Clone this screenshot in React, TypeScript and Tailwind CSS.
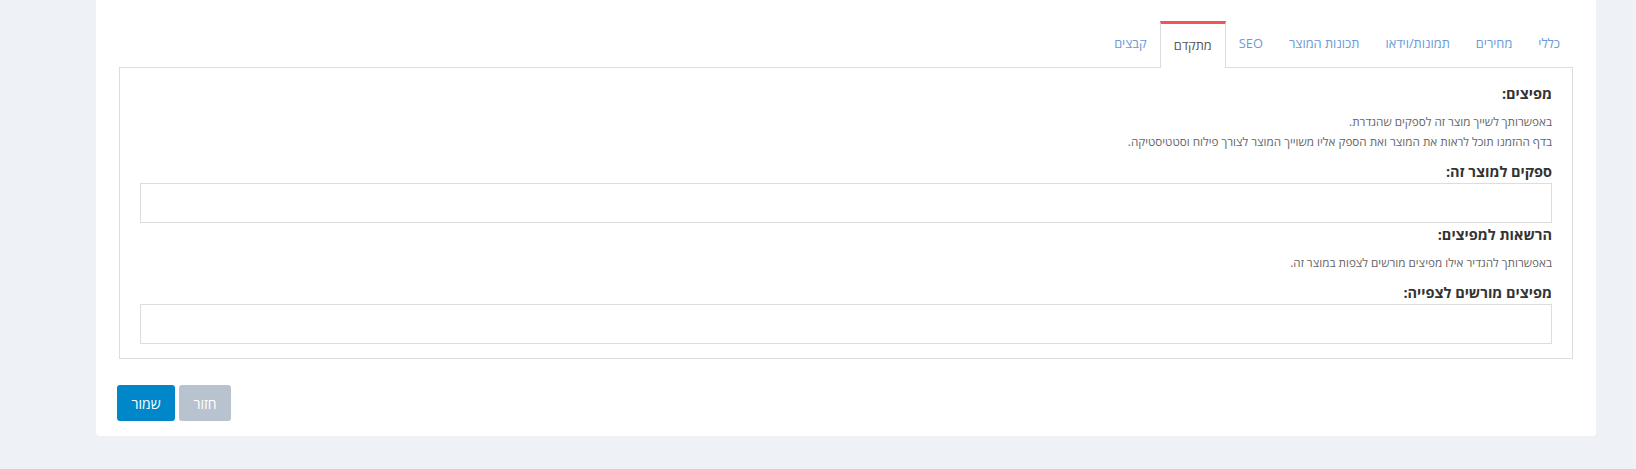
import React from "react";

const tabs = [
  { label: "כללי" },
  { label: "מחירים" },
  { label: "תמונות/וידאו" },
  { label: "תכונות המוצר" },
  { label: "SEO" },
  { label: "מתקדם", active: true },
  { label: "קבצים" },
];

export default function App() {
  return (
    <div
      dir="rtl"
      className="min-h-[469px] w-full bg-[#eef1f6] pr-[40px] pl-[96px] pb-[33px]"
      style={{ fontFamily: '"Open Sans", "Liberation Sans", Arial, sans-serif' }}
    >
      <div className="bg-white rounded-b-[4px] px-[23px] pt-[21px] pb-[15px]">
        {/* Tabs */}
        <div className="flex items-end border-b border-[#dddddd]">
          {tabs.map((t) =>
            t.active ? (
              <div
                key={t.label}
                className="relative -mb-px h-[47px] flex items-center px-[13px] bg-white border-x border-[#dddddd] border-t-[3px] border-t-[#ef5459] text-[12.8px] text-[#555555]"
              >
                <span className="pb-[1px]">{t.label}</span>
              </div>
            ) : (
              <div
                key={t.label}
                className="h-[46px] flex items-center px-[12px] border-x border-transparent text-[12.8px] text-[#6a9ad8]"
              >
                <span className="pb-[1px]">{t.label}</span>
              </div>
            )
          )}
        </div>

        {/* Panel */}
        <div className="border border-t-0 border-[#dddddd] px-[20px] pt-[16px] pb-[14px]">
          <div className="text-[14.5px] leading-[20px] font-bold text-[#333333]">מפיצים:</div>
          <div className="mt-[7px] text-[11.7px] leading-[20px] text-[#666666]">
            <div>באפשרותך לשייך מוצר זה לספקים שהגדרת.</div>
            <div>בדף ההזמנו תוכל לראות את המוצר ואת הספק אליו משוייך המוצר לצורך פילוח וסטטיסטיקה.</div>
          </div>

          <div className="mt-[11px] text-[14.5px] leading-[20px] font-bold text-[#333333]">ספקים למוצר זה:</div>
          <div className="mt-[1px] h-[40px] border border-[#dddddd] bg-white" />

          <div className="mt-[2px] text-[14.5px] leading-[20px] font-bold text-[#333333]">הרשאות למפיצים:</div>
          <div className="mt-[7px] text-[11.7px] leading-[20px] text-[#666666]">
            באפשרותך להגדיר אילו מפיצים מורשים לצפות במוצר זה.
          </div>

          <div className="mt-[11px] text-[14.5px] leading-[20px] font-bold text-[#333333]">מפיצים מורשים לצפייה:</div>
          <div className="mt-[1px] h-[40px] border border-[#dddddd] bg-white" />
        </div>

        {/* Buttons */}
        <div className="mt-[26px] flex justify-end gap-[4px] -ml-[2px]">
          <button className="h-[36px] w-[52px] rounded-[3px] bg-[#b9c3cf] text-white text-[14px]">
            חזור
          </button>
          <button className="h-[36px] w-[58px] rounded-[3px] bg-[#0087c9] text-white text-[14px]">
            שמור
          </button>
        </div>
      </div>
    </div>
  );
}
